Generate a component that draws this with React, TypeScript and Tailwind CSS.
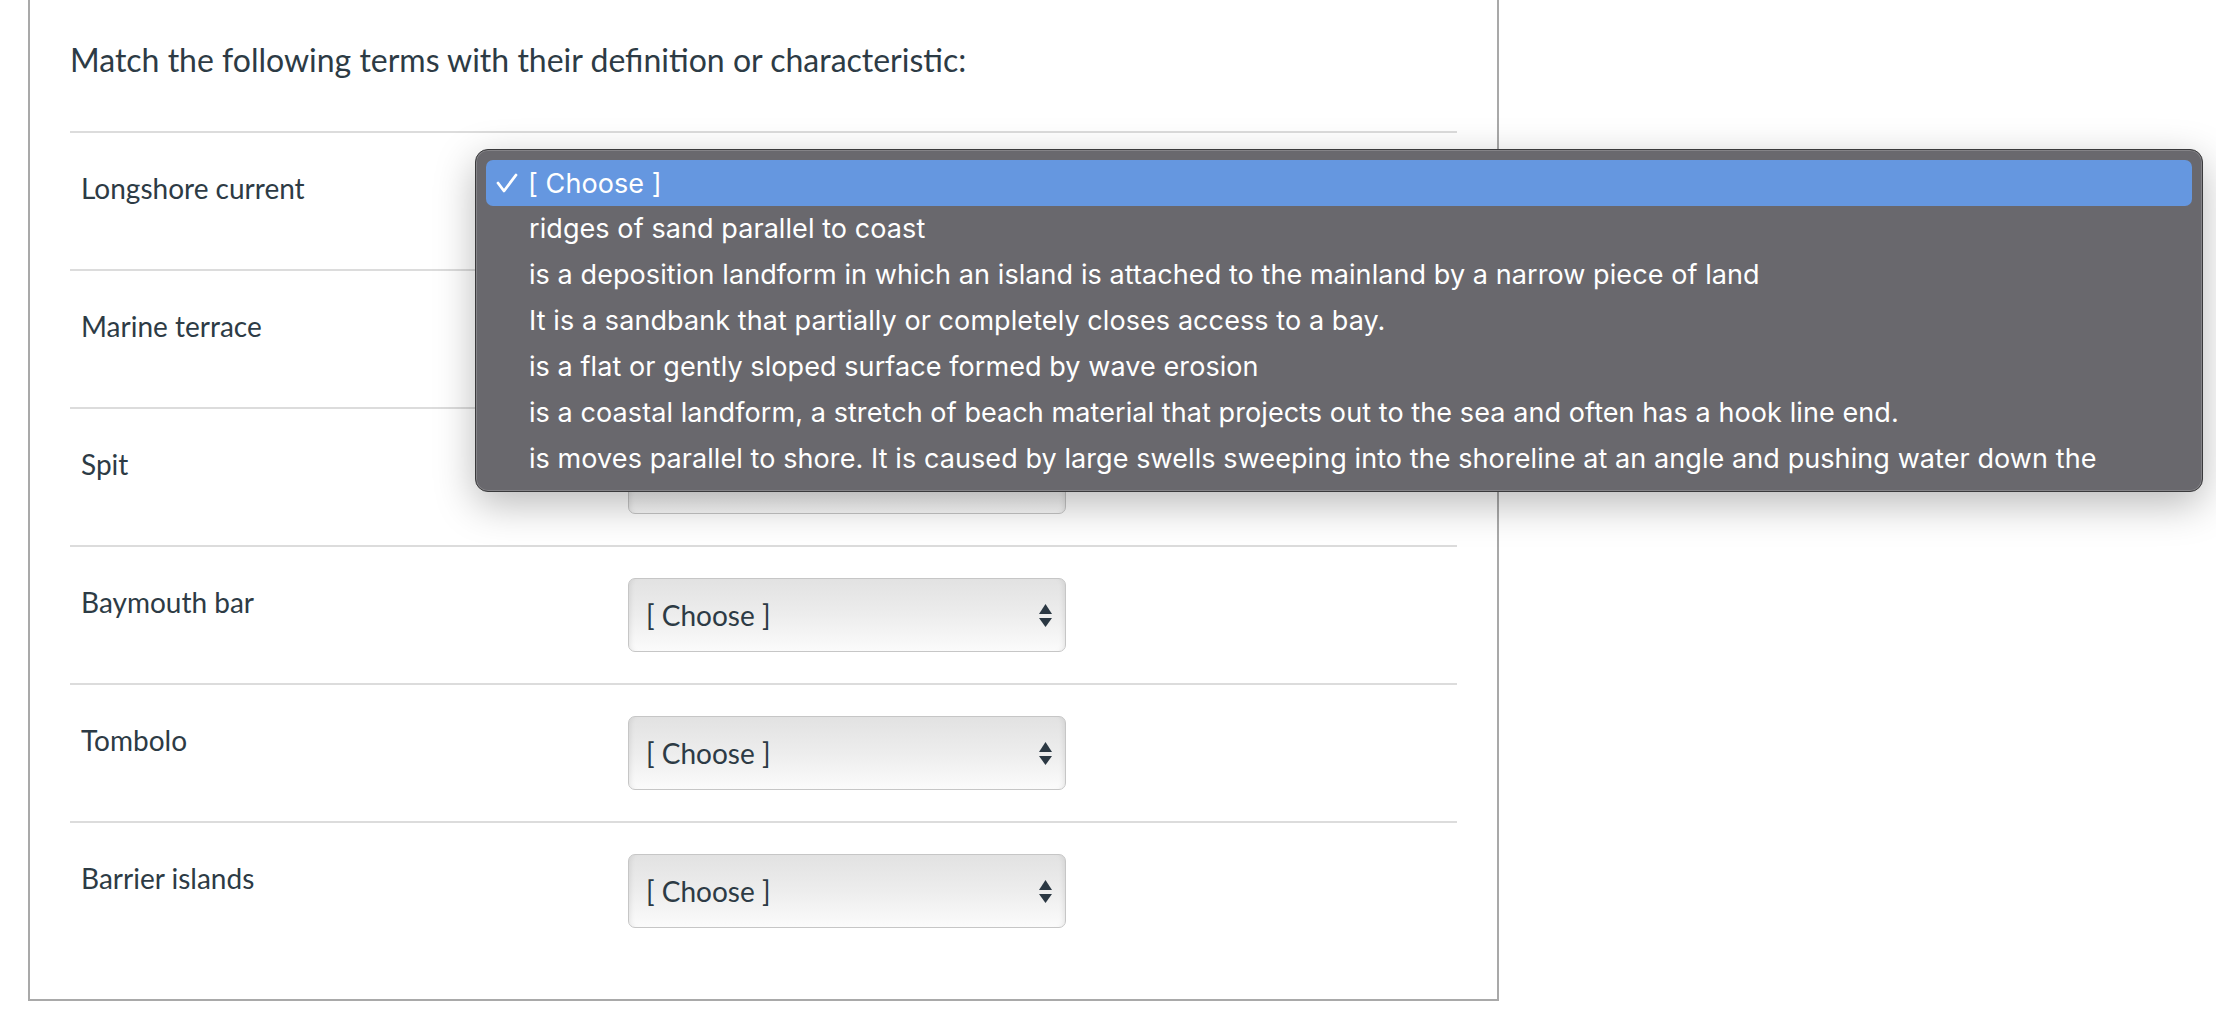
import React from "react";

const terms = [
  "Longshore current",
  "Marine terrace",
  "Spit",
  "Baymouth bar",
  "Tombolo",
  "Barrier islands",
];

const options = [
  "ridges of sand parallel to coast",
  "is a deposition landform in which an island is attached to the mainland by a narrow piece of land",
  "It is a sandbank that partially or completely closes access to a bay.",
  "is a flat or gently sloped surface formed by wave erosion",
  "is a coastal landform, a stretch of beach material that projects out to the sea and often has a hook line end.",
  "is moves parallel to shore. It is caused by large swells sweeping into the shoreline at an angle and pushing water down the",
];

function SelectBox() {
  return (
    <div className="w-[438px] h-[74px] rounded-[7px] border border-[#c6c6c6] bg-gradient-to-b from-[#e2e2e2] via-[#ededed] to-[#fbfbfb] shadow-[inset_6px_0_6px_-6px_rgba(0,0,0,0.12),inset_-6px_0_6px_-6px_rgba(0,0,0,0.12)] flex items-center justify-between pl-[17px] pr-[13px]">
      <span className="text-[28px] leading-none text-[#2d3b45]">[ Choose ]</span>
      <svg width="13" height="23" viewBox="0 0 13 23" className="shrink-0">
        <polygon points="6.5,0 13,10 0,10" fill="#2b3843" />
        <polygon points="0,14 13,14 6.5,23" fill="#2b3843" />
      </svg>
    </div>
  );
}

export default function App() {
  return (
    <div className="relative w-[2216px] h-[1026px] bg-white overflow-hidden" style={{ fontFamily: "Lato, 'Open Sans', sans-serif" }}>
      <div className="ml-[28px] w-[1471px] border-x-2 border-b-2 border-[#a9a9a9] px-10 pt-[39px] pb-10">
        <div className="text-[32px] leading-[42px] text-[#2d3b45] mb-[50px]">
          Match the following terms with their definition or characteristic:
        </div>
        {terms.map((t) => (
          <div key={t} className="flex border-t-2 border-[#dcdcdc] h-[138px]">
            <div className="w-[558px] pl-[11px] pt-[34px] text-[28px] leading-[42px] text-[#2d3b45]">{t}</div>
            <div className="flex items-center">
              <SelectBox />
            </div>
          </div>
        ))}
      </div>

      {/* open native select menu */}
      <div
        className="absolute left-[475px] top-[149px] w-[1728px] h-[343px] rounded-[13px] border border-[#3a3a3c] bg-[#69686d] p-[10px] shadow-[0_12px_40px_rgba(0,0,0,0.28),inset_0_0_0_1px_rgba(255,255,255,0.18)]"
        style={{ fontFamily: "Inter, 'Liberation Sans', sans-serif" }}
      >
        <div className="h-[46px] rounded-[7px] bg-[#6597e0] flex items-center text-white text-[27px] tracking-[0.08px]">
          <svg width="22" height="20" viewBox="0 0 22 20" className="ml-[10px] mr-[10px] shrink-0">
            <polyline points="2,10 8,18 20,2" fill="none" stroke="white" strokeWidth="2.8" strokeLinecap="round" strokeLinejoin="round" />
          </svg>
          <span className="leading-[46px] pt-[2px]">[ Choose ]</span>
        </div>
        {options.map((o) => (
          <div key={o} className="h-[46px] leading-[46px] pl-[43px] text-[27px] tracking-[0.08px] text-white whitespace-nowrap">
            {o}
          </div>
        ))}
      </div>
    </div>
  );
}
